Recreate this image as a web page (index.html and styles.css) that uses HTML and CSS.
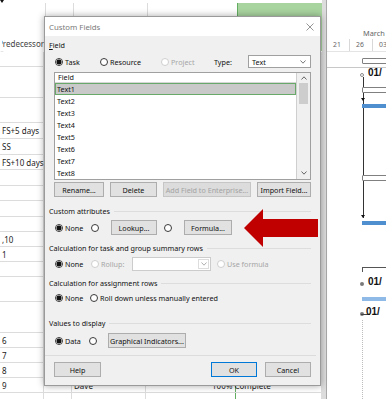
FILE: index.html
```html
<!DOCTYPE html>
<html>
  <head>
    <title>Custom Fields</title>
    <link rel="stylesheet" href="styles.css">
  </head>
  <body>
    <div class="app">
      <div class="sheet" id="sheet"></div>
      <div class="split"></div>
      <div class="gantt">
        <div class="timescale">
          <div class="tier-top">March</div>
          <div class="tier-bottom"><span>21</span><span>26</span><span>03</span></div>
        </div>
        <div class="chart">
          <div class="row-line"></div>
          <div class="outline-bar bar-a"></div>
          <div class="dot ring dot-a"></div>
          <div class="date date-a">01/</div>
          <div class="link"></div>
          <div class="outline-bar bar-b"></div>
          <div class="head head-a"></div>
          <div class="task-bar bar-c"></div>
          <div class="outline-bar bar-d"></div>
          <div class="head head-b"></div>
          <div class="task-bar bar-e"></div>
          <div class="bracket"></div>
          <div class="dot dot-b"></div>
          <div class="date date-b">01/</div>
          <div class="task-bar light bar-f"></div>
          <div class="dot dot-c"></div>
          <div class="dash"></div>
          <div class="date date-c">01/</div>
          <div class="today"></div>
        </div>
      </div>
    </div>

    <div class="dialog">
      <div class="titlebar">
        <span>Custom Fields</span>
        <svg class="close" width="8" height="8" viewBox="0 0 8 8"><path d="M0.5 0.5 L7.5 7.5 M7.5 0.5 L0.5 7.5" stroke="#8a8a8a" stroke-width="0.9"/></svg>
      </div>
      <div class="dlg-body">
        <div class="label"><u>F</u>ield</div>
        <div class="opts field-opts">
          <div class="opt w-task"><span class="radio on"></span>Task</div>
          <div class="opt w-res"><span class="radio"></span>Resource</div>
          <div class="opt w-proj disabled"><span class="radio"></span>Project</div>
          <span class="type-label">Type:</span>
          <div class="select type-select">Text<svg class="chev" width="6" height="4" viewBox="0 0 6 4"><polyline points="0.5,0.5 3,3.2 5.5,0.5" fill="none" stroke="#555" stroke-width="0.8"/></svg></div>
        </div>

        <div class="list">
          <div class="list-main">
            <div class="list-head">Field</div>
            <div class="list-row sel">Text1</div>
            <div class="list-row">Text2</div>
            <div class="list-row">Text3</div>
            <div class="list-row">Text4</div>
            <div class="list-row">Text5</div>
            <div class="list-row">Text6</div>
            <div class="list-row">Text7</div>
            <div class="list-row">Text8</div>
          </div>
          <div class="scroll">
            <svg class="arr" width="6" height="4" viewBox="0 0 6 4"><polyline points="0.5,3.5 3,0.8 5.5,3.5" fill="none" stroke="#555" stroke-width="0.9"/></svg>
            <div class="thumb"></div>
            <div class="track"></div>
            <svg class="arr" width="6" height="4" viewBox="0 0 6 4"><polyline points="0.5,0.5 3,3.2 5.5,0.5" fill="none" stroke="#555" stroke-width="0.9"/></svg>
          </div>
        </div>

        <div class="btn-row">
          <button class="btn w-rename">Rename...</button>
          <button class="btn w-delete">Delete</button>
          <button class="btn w-add" disabled>Add Field to Enterprise...</button>
          <button class="btn w-import">Import Field...</button>
        </div>

        <div class="section s-attr">Custom attributes</div>
        <div class="opts attr-opts">
          <div class="opt w-none"><span class="radio on"></span>None</div>
          <span class="radio"></span>
          <button class="btn w-lookup">Lookup...</button>
          <span class="radio r-formula"></span>
          <button class="btn w-formula">Formula...</button>
        </div>

        <div class="section s-sum">Calculation for task and group summary rows</div>
        <div class="opts sum-opts">
          <div class="opt w-none"><span class="radio on"></span>None</div>
          <div class="opt w-rollup disabled"><span class="radio"></span>Rollup:</div>
          <div class="select rollup-select"><span class="chev-box"><svg width="6" height="4" viewBox="0 0 6 4"><polyline points="0.5,0.5 3,3.2 5.5,0.5" fill="none" stroke="#9a9a9a" stroke-width="0.8"/></svg></span></div>
          <div class="opt use-formula disabled"><span class="radio"></span>Use formula</div>
        </div>

        <div class="section s-assign">Calculation for assignment rows</div>
        <div class="opts assign-opts">
          <div class="opt w-none2"><span class="radio on"></span>None</div>
          <div class="opt"><span class="radio"></span>Roll down unless manually entered</div>
        </div>

        <div class="section s-values">Values to display</div>
        <div class="opts values-opts">
          <div class="opt w-data"><span class="radio on"></span>Data</div>
          <span class="radio"></span>
          <button class="btn w-graph">Graphical Indicators...</button>
        </div>

        <div class="separator"></div>

        <div class="footer">
          <button class="btn w-help">Help</button>
          <div class="footer-right">
            <button class="btn ok">OK</button>
            <button class="btn">Cancel</button>
          </div>
        </div>
      </div>
    </div>

    <svg class="arrow" width="74" height="40" viewBox="0 0 74 40">
      <polygon points="0,20 19,1 19,11 74,11 74,29 19,29 19,39" fill="#c00000"/>
    </svg>

    <script>
      const rows = [
        [15], [31], [25], [16, 'FS+5 days'], [16, 'SS'], [15, 'FS+10 days'],
        [16], [15], [16], [15], [15, ',10'], [15, '1'], [15], [25], [31],
        [15, '6'], [15, '7'], [15, '8'], [15, '9', 'Dave', '100% Complete'], [15]
      ];

      let output = `
        <div class="sheet-row head" style="height: 52px">
          <div class="pred">Predecessors</div><div></div><div></div><div></div><div class="picked"></div>
        </div>`;
      rows.forEach(row => {
        output += `
          <div class="sheet-row" style="height: ${row[0]}px">
            <div>${row[1] || ''}</div><div></div><div>${row[2] || ''}</div><div class="done">${row[3] || ''}</div><div></div>
          </div>`;
      });
      document.getElementById('sheet').innerHTML = output;
    </script>
  </body>
</html>
```

FILE: styles.css
```css
* {
  box-sizing: border-box;
}
body {
  margin: 0;
  width: 386px;
  height: 399px;
  overflow: hidden;
  font-family: "Noto Sans", "Open Sans", sans-serif;
  background-color: #ffffff;
  color: #222222;
}
.app {
  display: flex;
  height: 399px;
}

/* sheet behind the dialog */
.sheet {
  width: 322px;
  flex: none;
  font-size: 8px;
}
.sheet-row {
  display: grid;
  grid-template-columns: 44px 28px 74px 90px 86px;
  border-bottom: 1px solid #dcdcdc;
}
.sheet-row > div {
  display: flex;
  align-items: center;
  padding-left: 2px;
  border-right: 1px solid #dcdcdc;
  white-space: nowrap;
}
.sheet-row > div:nth-child(4) {
  border-right-color: #62ad62;
}
.sheet-row .done {
  padding-left: 66px;
}
.head > div {
  align-items: flex-end;
  padding-bottom: 2px;
}
.head .pred {
  color: #444444;
  padding-left: 0;
  text-indent: -4px;
  overflow: hidden;
}
.head .picked {
  background-color: #a8d49f;
}

.split {
  width: 5px;
  flex: none;
  background-color: #dcdcdc;
  border-right: 1px solid #a9a9a9;
}

/* gantt */
.gantt {
  flex: 1;
  overflow: hidden;
  display: flex;
  flex-direction: column;
}
.timescale {
  height: 52px;
  flex: none;
  display: flex;
  flex-direction: column;
  justify-content: flex-end;
  color: #666666;
  border-bottom: 1px solid #e4e4e4;
}
.tier-top {
  height: 12px;
  line-height: 12px;
  font-size: 7.4px;
  padding-left: 36px;
  white-space: nowrap;
}
.tier-bottom {
  height: 12px;
  display: flex;
  font-size: 6.8px;
  line-height: 12px;
}
.tier-bottom span {
  width: 23px;
  flex: none;
  padding-left: 6px;
  border-right: 1px solid #d8d8d8;
}
.chart {
  flex: 1;
  position: relative;
}
.chart > div {
  position: absolute;
}
.row-line {
  left: 0;
  right: 0;
  top: 15px;
  height: 1px;
  background-color: #c8c8c8;
}
.outline-bar {
  left: 35px;
  width: 40px;
  height: 6px;
  border: 1px solid #808080;
  border-radius: 1px;
  background-color: #ffffff;
}
.bar-a { top: 6px; }
.bar-b { top: 35px; }
.bar-d { top: 123px; }
.task-bar {
  left: 35px;
  width: 40px;
  height: 4px;
  background-color: #4f8fd0;
}
.task-bar.light {
  background-color: #8fb9e6;
}
.bar-c { top: 52px; }
.bar-e { top: 169px; }
.bar-f { top: 245px; }
.dot {
  left: 33px;
  width: 4px;
  height: 4px;
  border-radius: 50%;
  background-color: #7a7a7a;
}
.dot.ring {
  background-color: #ffffff;
  border: 1px solid #8a8a8a;
}
.dot-a { top: 21px; }
.dot-b { top: 230px; }
.dot-c { top: 260px; }
.date {
  left: 41px;
  font-family: "Liberation Sans", Arial, sans-serif;
  font-weight: bold;
  font-size: 10px;
  line-height: 10px;
  color: #111111;
  white-space: nowrap;
}
.date-a { top: 16px; }
.date-b { top: 225px; }
.date-c { top: 255px; left: 39px; }
.dash {
  left: 34px;
  top: 262px;
  width: 9px;
  height: 1px;
  background-color: #444444;
}
.link {
  left: 36px;
  top: 25px;
  width: 1px;
  height: 141px;
  background-color: #333333;
}
.head {
  left: 34px;
  width: 0;
  height: 0;
  border-left: 2px solid transparent;
  border-right: 2px solid transparent;
  border-top: 3px solid #111111;
}
.head-a { top: 46px; }
.head-b { top: 163px; }
.bracket {
  left: 35px;
  top: 215px;
  width: 40px;
  height: 5px;
  border-top: 1px solid #555555;
  border-left: 1px solid #555555;
}
.today {
  left: 35px;
  top: 268px;
  bottom: 0;
  border-left: 1px dotted #bdbdbd;
}

/* dialog */
.dialog {
  position: absolute;
  left: 44px;
  top: 16px;
  width: 277px;
  height: 370px;
  display: flex;
  flex-direction: column;
  background-color: #f0f0f0;
  border: 1px solid #9a9a9a;
  box-shadow: 0px 0px 7px 0px rgba(0,0,0,0.35);
  font-size: 7.2px;
  color: #111111;
}
.titlebar {
  height: 19px;
  flex: none;
  display: flex;
  align-items: center;
  justify-content: space-between;
  padding: 0 6px 0 4px;
  background-color: #ffffff;
  font-size: 7.8px;
  color: #7a7a7a;
}
.dlg-body {
  padding: 4px 9px 0 4px;
}
.label {
  height: 10px;
  line-height: 10px;
}
.opts {
  display: flex;
  align-items: center;
  margin-left: 6px;
}
.opt {
  display: flex;
  align-items: center;
  white-space: nowrap;
  flex: none;
}
.opt .radio {
  margin-right: 2px;
}
.disabled {
  color: #a6a6a6;
}
.radio {
  width: 8px;
  height: 8px;
  flex: none;
  border-radius: 50%;
  border: 1px solid #3a3a3a;
  background-color: #ffffff;
}
.radio.on {
  background: radial-gradient(circle, #111111 2.2px, #ffffff 2.8px);
}
.disabled .radio {
  border-color: #cfcfcf;
}

.field-opts {
  height: 13px;
  margin-top: 5px;
}
.w-task { width: 45px; }
.w-res { width: 61px; }
.w-proj { width: 53px; }
.type-label {
  width: 34px;
  flex: none;
}
.select {
  display: flex;
  align-items: center;
  justify-content: space-between;
  background-color: #ffffff;
  border: 1px solid #a0a0a0;
  flex: none;
}
.type-select {
  width: 63px;
  height: 13px;
  padding: 0 4px 0 3px;
}

.list {
  display: flex;
  height: 108px;
  margin: 4px 0 0 5px;
  border: 1px solid #a0a0a0;
  background-color: #ffffff;
}
.list-main {
  flex: 1;
  border-right: 1px solid #cfcfcf;
}
.list-head {
  height: 10px;
  line-height: 9px;
  padding-left: 3px;
  border-bottom: 1px solid #d6d6d6;
}
.list-row {
  height: 12px;
  line-height: 12px;
  padding-left: 2px;
}
.list-row.sel {
  background-color: #c9c9c9;
  border: 1px solid #68a868;
  line-height: 10px;
  padding-left: 1px;
}
.scroll {
  width: 13px;
  display: flex;
  flex-direction: column;
  align-items: center;
  background-color: #f0f0f0;
  padding: 3px 0 4px;
}
.scroll .arr {
  flex: none;
}
.thumb {
  width: 9px;
  height: 21px;
  margin-top: 3px;
  background-color: #cdcdcd;
}
.track {
  flex: 1;
}

.btn {
  height: 15px;
  padding: 0;
  font-family: inherit;
  font-size: inherit;
  color: #111111;
  background-color: #e1e1e1;
  border: 1px solid #adadad;
  flex: none;
  white-space: nowrap;
}
.btn:disabled {
  color: #a3a3a3;
  background-color: #dcdcdc;
  border-color: #c6c6c6;
}
.btn.ok {
  border-color: #0078d7;
}
.btn-row {
  display: flex;
  justify-content: space-between;
  margin: 2px 0 0 5px;
}
.w-rename { width: 50px; }
.w-delete { width: 47px; }
.w-add { width: 88px; }
.w-import { width: 54px; }

.section {
  display: flex;
  align-items: center;
  height: 10px;
  white-space: nowrap;
}
.section::after {
  content: "";
  flex: 1;
  height: 1px;
  margin-left: 4px;
  background-color: #dddddd;
}
.s-attr { margin-top: 9px; }
.s-sum { margin-top: 8px; }
.s-assign { margin-top: 7px; }
.s-values { margin-top: 14px; }

.attr-opts {
  height: 15px;
  margin-top: 4px;
}
.w-none { width: 36px; }
.w-lookup {
  width: 46px;
  margin-left: 12px;
}
.r-formula {
  margin-left: 7px;
}
.w-formula {
  width: 48px;
  margin-left: 12px;
}

.sum-opts {
  height: 14px;
  margin-top: 4px;
}
.w-rollup { width: 41px; }
.rollup-select {
  width: 79px;
  height: 14px;
  justify-content: flex-end;
  border-color: #cccccc;
  padding-right: 1px;
}
.chev-box {
  width: 11px;
  height: 10px;
  display: flex;
  align-items: center;
  justify-content: center;
  border: 1px solid #dddddd;
}
.use-formula {
  margin-left: 6px;
}

.assign-opts {
  height: 12px;
  margin-top: 4px;
}
.w-none2 { width: 35px; }

.values-opts {
  height: 15px;
  margin-top: 5px;
}
.w-data { width: 34px; }
.w-graph {
  width: 78px;
  margin-left: 11px;
}

.separator {
  height: 1px;
  margin: 7px -5px 0 -4px;
  background-color: #dcdcdc;
}
.footer {
  display: flex;
  justify-content: space-between;
  margin: 6px 0 0 5px;
}
.w-help { width: 47px; }
.footer-right {
  display: flex;
  gap: 8px;
}
.footer-right .btn {
  width: 46px;
}

.arrow {
  position: absolute;
  left: 244px;
  top: 208px;
}
```
